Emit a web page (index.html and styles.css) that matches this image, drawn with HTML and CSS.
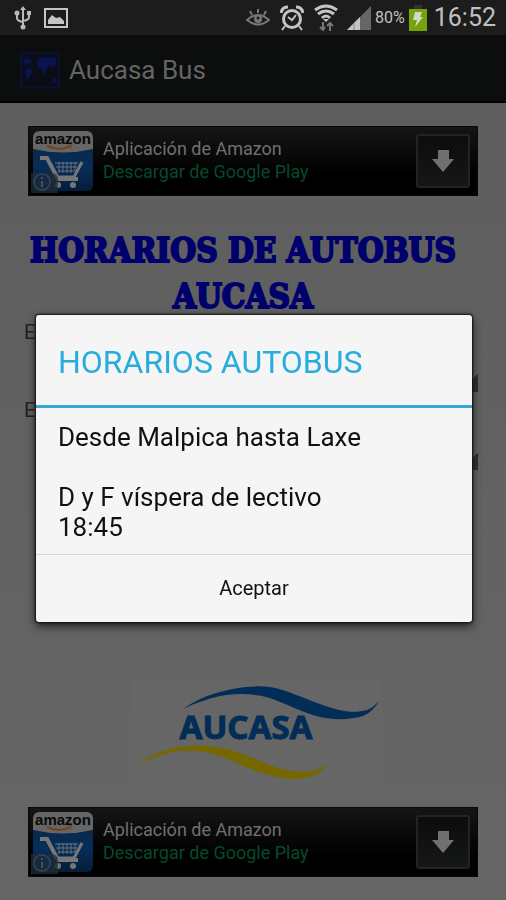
FILE: index.html
```html
<!DOCTYPE html>
<html lang="es">
<head>
<meta charset="utf-8">
<meta name="viewport" content="width=device-width, initial-scale=1">
<title>Aucasa Bus</title>
<link rel="stylesheet" href="styles.css">
</head>
<body>
<svg class="defs" aria-hidden="true">
  <defs>
    <linearGradient id="blue" x1="0" y1="0" x2="0" y2="1"><stop offset="0" stop-color="#0a2444"/><stop offset=".6" stop-color="#062e58"/><stop offset="1" stop-color="#051d3a"/></linearGradient>
    <symbol id="amazon" viewBox="0 0 64 64">
      <rect x="2" y="2" width="60" height="60" rx="6" fill="url(#blue)"/>
      <path d="M2 20V9Q2 2 9 2H55Q62 2 62 9V20Q32 27 2 20Z" fill="#666"/>
      <text class="brand" x="32" y="15" text-anchor="middle">amazon</text>
      <path d="M16 17Q29 23 39 17" fill="none" stroke="#70451a" stroke-width="2"/>
      <path d="M37 16H41L39 20" fill="none" stroke="#70451a" stroke-width="1"/>
      <path d="M9 29H16L27 50H47" fill="none" stroke="#777" stroke-width="4"/>
      <path d="M25 48H43L51 33" fill="none" stroke="#777" stroke-width="3"/>
      <path d="M24 34H47M25 38H46M27 42H44M28 33V44M32 33V44M36 33V44M40 33V44M44 33V42" stroke="#69737e" stroke-width="1"/>
      <circle cx="27" cy="56" r="3" fill="#777"/><circle cx="42" cy="56" r="3" fill="#777"/>
      <path d="M0 44H20Q27 44 27 51V66H0Z" fill="#222c36" opacity=".75"/>
      <circle cx="11" cy="53" r="8" fill="#16293d" stroke="#34475a" stroke-width="1.5"/>
      <path d="M11 52V58M11 48V50" stroke="#3e5266" stroke-width="2"/>
    </symbol>
    <symbol id="down" viewBox="0 0 22 22"><path d="M6 0H17V9H22L11 22L0 9H6Z" fill="#707070"/></symbol>
  </defs>
</svg>

<div class="screen">
  <header class="status">
    <svg width="18" height="26" viewBox="0 0 18 26" fill="none" stroke="#bbb" stroke-width="2"><path d="M9 3V22M3 8V13Q3 16 9 17M15 8V12Q15 15 9 16"/><path d="M9 1L12 5H6Z" fill="#bbb" stroke="none"/><circle cx="9" cy="22" r="2.5" fill="#bbb" stroke="none"/><circle cx="3" cy="8" r="2.5" fill="#bbb" stroke="none"/><path d="M13 6H17V10H13Z" fill="#bbb" stroke="none"/></svg>
    <svg class="photo" width="24" height="20" viewBox="0 0 24 20"><rect x="1" y="1" width="22" height="18" fill="none" stroke="#c4c4c4" stroke-width="2"/><path d="M4 16V12L8 7L12 10L16 9L20 13V16Z" fill="#c4c4c4"/></svg>
    <div class="spacer"></div>
    <svg width="24" height="18" viewBox="0 0 24 18" fill="none" stroke="#777" stroke-width="2"><path d="M1 11Q12 1 23 11Q12 20 1 11Z"/><circle cx="12" cy="10" r="4" fill="#777" stroke="none"/><path d="M12 0V4M4 2L6 6M20 2L18 6"/><circle cx="12" cy="9" r="1.5" fill="#1c1c1c" stroke="none"/></svg>
    <svg class="alarm" width="24" height="26" viewBox="0 0 24 26" fill="none" stroke="#c4c4c4"><circle cx="12" cy="14" r="8.5" stroke-width="3"/><path d="M8 12L12 15L16 10M5 21L2 25M19 21L22 25" stroke-width="2"/><path d="M1 8Q2 2 8 2M23 8Q22 2 16 2" stroke-width="3"/></svg>
    <svg width="26" height="28" viewBox="0 0 26 28" fill="none" stroke="#c4c4c4" stroke-width="3"><path d="M2 6Q13 -2 24 6M5 10Q13 4 21 10M9 14Q13 10 17 14"/><path d="M10 15H16L13 18Z" fill="#c4c4c4" stroke="none"/><path d="M10 18V26M7 23L10 26L12 23M17 27V19M14 22L17 19L20 22" stroke="#777" stroke-width="2"/></svg>
    <svg class="signal" width="24" height="24" viewBox="0 0 24 24"><path d="M24 0V24H0Z" fill="#666"/><path d="M13 11V24H0Z" fill="#c4c4c4"/><path d="M7 17V24" stroke="#888"/></svg>
    <span class="percent">80%</span>
    <svg class="battery" width="18" height="26" viewBox="0 0 18 26"><path d="M5 0H13V4H5Z" fill="#333"/><path d="M0 4H18V26H0Z" fill="#74a30c"/><path d="M6 7H13L11 12H14L6 22L8 15H4Z" fill="#d4d8ca"/></svg>
    <time class="clock">16:52</time>
  </header>

  <div class="appbar">
    <svg width="40" height="36" viewBox="0 0 40 36"><rect x="1" y="1" width="38" height="34" fill="#0a0c18" stroke="#0b1034" stroke-width="2"/><path d="M3 8L8 6L12 9L9 12L5 13ZM5 18L11 16L12 20L8 28L6 24ZM17 9L22 5L36 6L36 14L33 12L32 17L29 13L27 16L25 23L21 17L17 14ZM32 28L36 26V31H33ZM5 4H7V5H5Z" fill="#0c1450"/></svg>
    <span class="appname">Aucasa Bus</span>
  </div>

  <main class="content">
    <section class="ad">
      <svg class="adicon" width="64" height="64" role="img" aria-label="Amazon"><use href="#amazon"/></svg>
      <div class="adtext"><div>Aplicación de Amazon</div><div class="play">Descargar de Google Play</div></div>
      <button class="download" aria-label="Descargar"><svg width="22" height="22"><use href="#down"/></svg></button>
    </section>

    <h1>HORARIOS DE AUTOBUS AUCASA</h1>

    <form class="stops">
      <label for="from">E</label>
      <select id="from"></select>
      <label for="to">E</label>
      <select id="to"></select>
    </form>

    <svg class="logo" width="252" height="102" viewBox="0 0 252 102" role="img" aria-label="Aucasa">
      <rect width="252" height="102" fill="#666"/>
      <path d="M53 28C66 19 78 14 90 11C104 7 122 4 140 6C157 9 173 17 190 23C209 30 223 33 237 29C242 27 246 23 249 20C245 27 240 32 233 35C220 39 205 39 190 36C173 32 157 23 140 17C122 12 105 12 90 15C77 18 65 22 53 28Z" fill="#022d56"/>
      <path d="M5 85C14 79 22 74 30 71C48 64 69 63 87 66C108 69 126 79 143 85C160 91 182 95 197 83C194 87 191 91 187 93C173 100 157 99 143 95C124 91 108 82 90 75C76 70 63 69 50 70C33 72 19 78 5 85Z" fill="#756800"/>
      <text class="logotype" x="116" y="58" text-anchor="middle">AUCASA</text>
    </svg>

    <section class="ad">
      <svg class="adicon" width="64" height="64" role="img" aria-label="Amazon"><use href="#amazon"/></svg>
      <div class="adtext"><div>Aplicación de Amazon</div><div class="play">Descargar de Google Play</div></div>
      <button class="download" aria-label="Descargar"><svg width="22" height="22"><use href="#down"/></svg></button>
    </section>
  </main>
</div>

<div class="overlay">
  <div class="dialog" role="dialog" aria-labelledby="title">
    <h2 id="title">HORARIOS AUTOBUS</h2>
    <div class="message">
      <p>Desde Malpica hasta Laxe</p>
      <p>D y F víspera de lectivo<br>18:45</p>
    </div>
    <button class="accept">Aceptar</button>
  </div>
</div>
</body>
</html>
```
FILE: styles.css
```css
* { box-sizing: border-box; }
body { margin: 0; background: #646464; font-family: Roboto, "Liberation Sans", sans-serif; }
button { font: inherit; cursor: pointer; }
.defs { position: absolute; width: 0; height: 0; }
.screen { display: flex; flex-direction: column; min-height: 100vh; }

.status { display: flex; align-items: center; height: 35px; padding: 0 10px 0 14px; background: #1c1c1c; color: #c0c0c0; }
.photo { margin-left: 12px; }
.spacer { flex: 1; }
.alarm { margin: 0 9px 0 10px; }
.signal { margin: 0 4px 0 8px; }
.percent { font-size: 16px; }
.battery { margin: 0 7px 0 4px; }
.clock { font-size: 25px; }

.appbar { display: flex; align-items: center; gap: 9px; height: 68px; padding: 3px 20px 0; background: #0c0d0d; border-bottom: 2px solid #000; }
.appname { font-size: 26px; color: #646464; }

.content { display: flex; flex-direction: column; flex: 1; padding: 23px 28px; background: linear-gradient(#5e5e5e, #666); }
.ad { display: flex; align-items: center; height: 70px; padding: 0 7px 0 2px; background: linear-gradient(#151515, #000 70%); border: 1px solid #080808; }
.adicon { flex: none; }
.adtext { flex: 1; margin-left: 8px; padding-bottom: 3px; font-size: 18px; line-height: 23px; color: #707070; }
.play { color: #064a2b; }
.download { display: flex; align-items: center; justify-content: center; width: 54px; height: 54px; padding: 0; background: linear-gradient(#0c0c0c, #151718); border: 2px solid #232323; border-radius: 3px; }

h1 { margin: 32px 20px 0 0; font: bold 33px/46px "DejaVu Serif Condensed", "DejaVu Serif", serif; text-align: center; color: #00006c; -webkit-text-stroke: 2px #00006c; }
.stops { display: flex; flex-direction: column; margin-left: -4px; color: #222; }
.stops label { height: 24px; font-size: 20px; line-height: 24px; }
.stops select { height: 48px; margin: 0 0 6px 4px; appearance: none; border: 0; background: linear-gradient(135deg, transparent 50%, #2e2e2e 50%) right 0 bottom 0 / 18px 18px no-repeat; }
.logo { margin: auto auto 24px 102px; }
.brand { font: bold 15px "Liberation Sans", sans-serif; fill: #080808; }
.logotype { font: bold 33px "Noto Sans", sans-serif; fill: #022d56; stroke: #022d56; stroke-width: 1px; }

.overlay { position: fixed; inset: 0; display: flex; align-items: center; justify-content: center; padding: 36px 34px 0 36px; }
.dialog { width: 100%; overflow: hidden; background: #f5f5f5; border-radius: 3px; box-shadow: 0 0 2px 1px #111, 0 4px 10px #1c1c1c; }
h2 { margin: 0; padding: 27px 22px 23px; border-bottom: 3px solid #33a9d3; font-size: 32px; font-weight: 400; line-height: 40px; color: #27ace0; }
.message { padding: 14px 22px 12px; font-size: 26px; line-height: 30px; color: #111; }
.message p { margin: 0; }
.message p + p { margin-top: 30px; }
.accept { display: block; width: 100%; height: 68px; padding: 0; border: 0; border-top: 1px solid #d5d5d5; background: transparent; font-size: 20px; color: #111; }
```
